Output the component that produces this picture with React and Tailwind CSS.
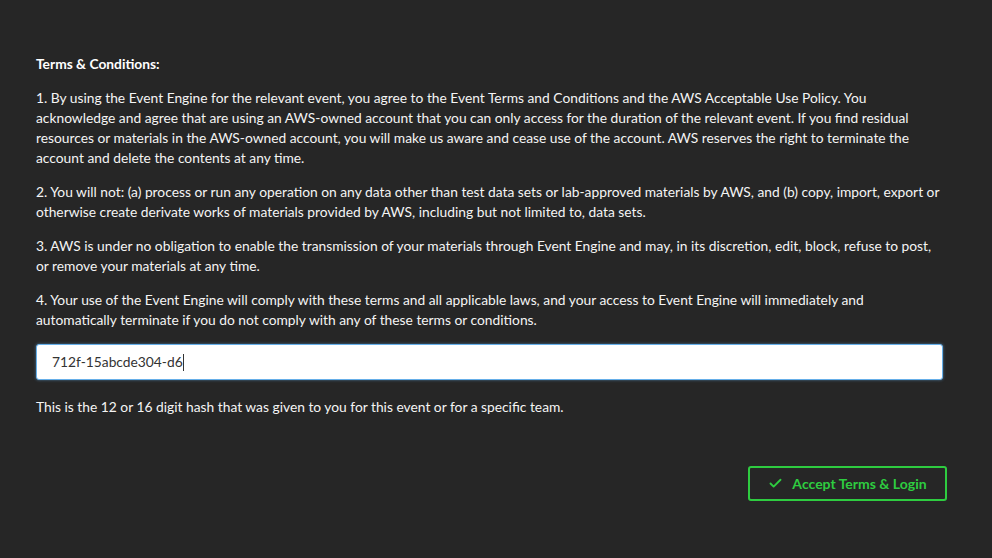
import { Check } from "lucide-react";

const paragraphs = [
  "1. By using the Event Engine for the relevant event, you agree to the Event Terms and Conditions and the AWS Acceptable Use Policy. You acknowledge and agree that are using an AWS-owned account that you can only access for the duration of the relevant event. If you find residual resources or materials in the AWS-owned account, you will make us aware and cease use of the account. AWS reserves the right to terminate the account and delete the contents at any time.",
  "2. You will not: (a) process or run any operation on any data other than test data sets or lab-approved materials by AWS, and (b) copy, import, export or otherwise create derivate works of materials provided by AWS, including but not limited to, data sets.",
  "3. AWS is under no obligation to enable the transmission of your materials through Event Engine and may, in its discretion, edit, block, refuse to post, or remove your materials at any time.",
  "4. Your use of the Event Engine will comply with these terms and all applicable laws, and your access to Event Engine will immediately and automatically terminate if you do not comply with any of these terms or conditions.",
];

export default function App() {
  return (
    <div
      className="w-full min-h-[558px] bg-[#262626] text-[#f4f4f4] text-[13.8px] leading-[20px]"
      style={{ fontFamily: "Lato, 'Open Sans', sans-serif" }}
    >
      <div className="pl-[36px] pr-[49px] pt-[54px]">
        <h3 className="font-bold text-white mb-[14px]">Terms &amp; Conditions:</h3>
        {paragraphs.map((p, i) => (
          <p key={i} className="mb-[14px]">
            {p}
          </p>
        ))}
        <div className="h-[36px] bg-white rounded-[3px] border border-[#66afe9] flex items-center px-[15px] text-[#333] shadow-[0_0_3px_rgba(102,175,233,0.6)]">
          <span>712f-15abcde304-d6</span>
          <span className="w-px h-[17px] bg-[#333]" />
        </div>
        <p className="mt-[17px]">
          This is the 12 or 16 digit hash that was given to you for this event or for a specific team.
        </p>
        <div className="flex justify-end mt-[49px] -mr-[4px]">
          <button className="h-[35px] w-[199px] border-2 border-[#2ecc40] rounded-[3px] flex items-center justify-center gap-[9px] text-[#2ecc40] font-bold text-[14px]">
            <Check size={15} strokeWidth={3} />
            Accept Terms &amp; Login
          </button>
        </div>
      </div>
    </div>
  );
}
